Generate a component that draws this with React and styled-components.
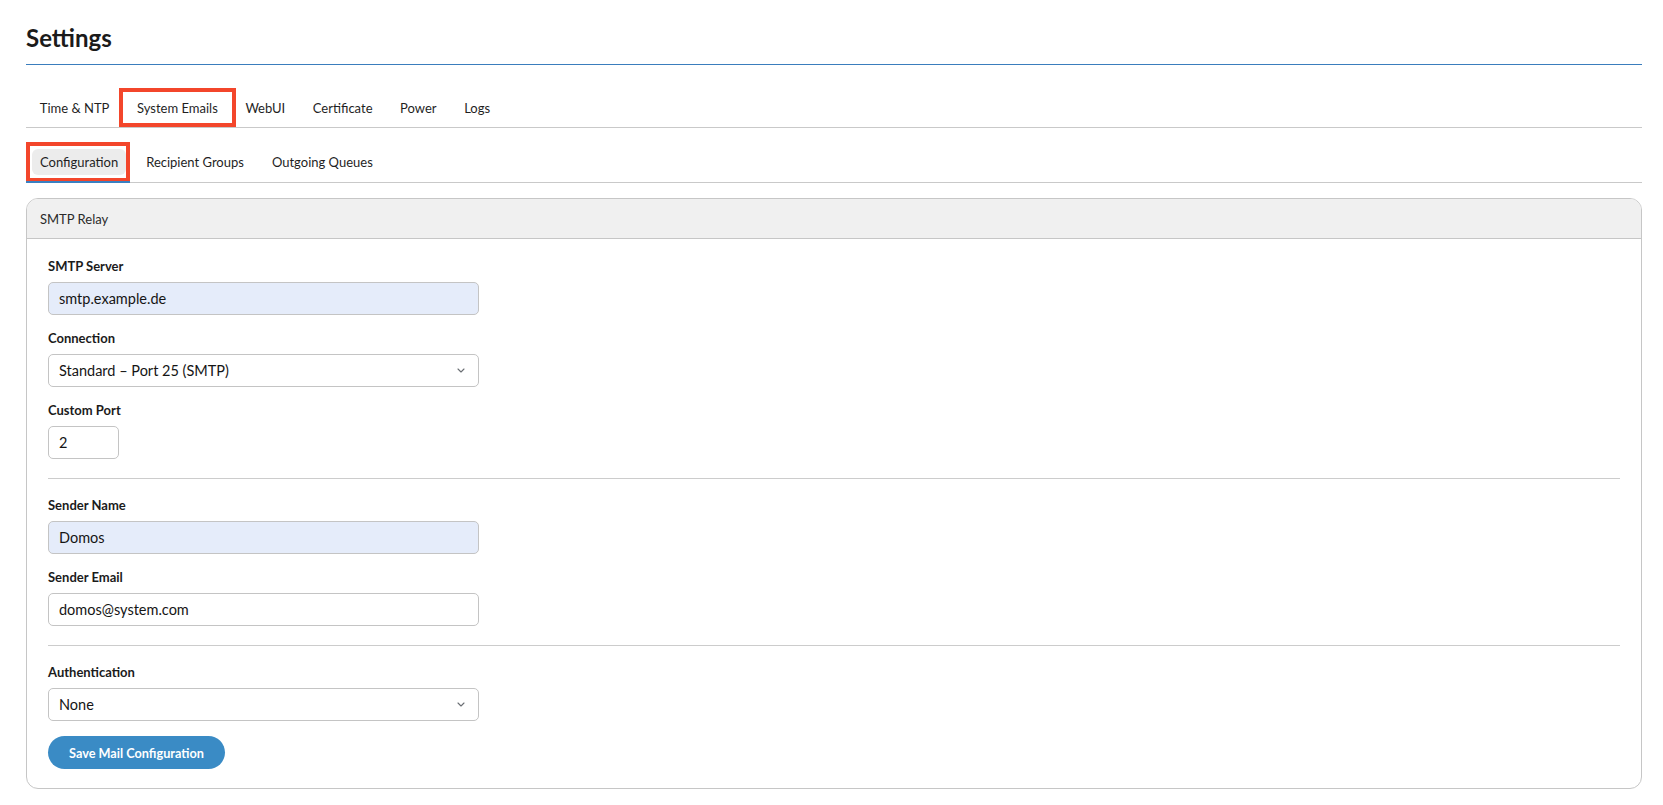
import styled, { createGlobalStyle } from "styled-components";

const GlobalStyle = createGlobalStyle`
  html, body {
    margin: 0;
    padding: 0;
    background: #ffffff;
  }
  body {
    font-family: Lato, "Liberation Sans", Arial, sans-serif;
    color: #151515;
  }
  * {
    box-sizing: border-box;
  }
`;

const mainTabs = ["Time & NTP", "System Emails", "WebUI", "Certificate", "Power", "Logs"];
const subTabs = ["Configuration", "Recipient Groups", "Outgoing Queues"];

const Chevron = () => (
  <svg width="8" height="5" viewBox="0 0 8 5" fill="none">
    <path d="M1 1l3 3 3-3" stroke="#6a6e73" strokeWidth="1.1" strokeLinecap="round" strokeLinejoin="round" />
  </svg>
);

export default function App() {
  return (
    <Page>
      <GlobalStyle />
      <Header>
        <Title>Settings</Title>
      </Header>

      <MainTabBar>
        {mainTabs.map((t) => (
          <MainTab key={t}>
            {t}
            {t === "System Emails" && <Marker $inset="0 -4px 0 -4px" />}
          </MainTab>
        ))}
      </MainTabBar>

      <SubTabBar>
        {subTabs.map((t, i) => (
          <SubTab key={t} $active={i === 0}>
            <SubTabPill $active={i === 0}>{t}</SubTabPill>
            {i === 0 && <Marker $inset="0 2px 0 0" />}
          </SubTab>
        ))}
      </SubTabBar>

      <Card>
        <CardHeader>SMTP Relay</CardHeader>
        <CardBody>
          <Field>
            <Label>SMTP Server</Label>
            <TextInput $autofill defaultValue="smtp.example.de" />
          </Field>
          <Field>
            <Label>Connection</Label>
            <SelectBox>
              <span>Standard – Port 25 (SMTP)</span>
              <Chevron />
            </SelectBox>
          </Field>
          <Field>
            <Label>Custom Port</Label>
            <TextInput $width="71px" defaultValue="2" />
          </Field>

          <Divider />

          <Field>
            <Label>Sender Name</Label>
            <TextInput $autofill defaultValue="Domos" />
          </Field>
          <Field>
            <Label>Sender Email</Label>
            <TextInput defaultValue="domos@system.com" />
          </Field>

          <Divider />

          <Field>
            <Label>Authentication</Label>
            <SelectBox>
              <span>None</span>
              <Chevron />
            </SelectBox>
          </Field>

          <SaveButton type="button">Save Mail Configuration</SaveButton>
        </CardBody>
      </Card>
    </Page>
  );
}

const Page = styled.div`
  padding: 0 21px 14px 26px;
`;

const Header = styled.header`
  padding: 24px 0 12px;
  border-bottom: 1px solid #3a7dbd;
`;

const Title = styled.h1`
  margin: 0;
  font-size: 24px;
  line-height: 28px;
  font-weight: 700;
  color: #1b1b1b;
`;

const MainTabBar = styled.nav`
  display: flex;
  margin-top: 23px;
  border-bottom: 1px solid #c9c9c9;
`;

const MainTab = styled.div`
  position: relative;
  display: flex;
  align-items: center;
  height: 39px;
  padding: 0 13.8px;
  font-size: 13px;
  color: #1f1f1f;
  white-space: nowrap;
`;

/* red outline drawn around the highlighted tabs */
const Marker = styled.span`
  position: absolute;
  inset: ${(p) => p.$inset};
  border: 4px solid #f3462b;
  pointer-events: none;
`;

const SubTabBar = styled.nav`
  display: flex;
  margin-top: 14px;
  border-bottom: 1px solid #c9c9c9;
`;

const SubTab = styled.div`
  position: relative;
  display: flex;
  align-items: stretch;
  height: 40px;
  padding: 7px 6px 7px;

  &::after {
    content: "";
    display: ${(p) => (p.$active ? "block" : "none")};
    position: absolute;
    left: 0;
    right: 2px;
    bottom: -1px;
    height: 2px;
    background: #3a80c2;
  }
`;

const SubTabPill = styled.div`
  display: flex;
  align-items: center;
  padding: 0 8px;
  border-radius: 6px;
  background: ${(p) => (p.$active ? "#ececec" : "transparent")};
  font-size: 13px;
  color: #1f1f1f;
  white-space: nowrap;
`;

const Card = styled.section`
  margin-top: 15px;
  border: 1px solid #c6c6c6;
  border-radius: 12px;
  overflow: hidden;
`;

const CardHeader = styled.div`
  height: 40px;
  display: flex;
  align-items: center;
  padding: 0 13px;
  background: #f0f0f0;
  border-bottom: 1px solid #c6c6c6;
  font-size: 13px;
  color: #2a2a2a;
`;

const CardBody = styled.div`
  display: flex;
  flex-direction: column;
  align-items: flex-start;
  padding: 18px 21px 19px;
`;

const Field = styled.div`
  display: flex;
  flex-direction: column;
  margin-bottom: 14px;

  &:last-of-type {
    margin-bottom: 0;
  }
`;

const Label = styled.label`
  font-size: 13px;
  line-height: 18px;
  font-weight: 700;
  color: #1b1b1b;
  margin-bottom: 7px;
`;

const TextInput = styled.input`
  width: ${(p) => p.$width || "431px"};
  height: 33px;
  padding: 0 10px;
  border: 1px solid #c4c4c4;
  border-radius: 5px;
  background: ${(p) => (p.$autofill ? "#e5ecfa" : "#ffffff")};
  font-family: inherit;
  font-size: 14.5px;
  color: #151515;
  outline: none;
`;

const SelectBox = styled.div`
  width: 431px;
  height: 33px;
  display: flex;
  align-items: center;
  justify-content: space-between;
  padding: 0 13px 0 10px;
  border: 1px solid #c4c4c4;
  border-radius: 5px;
  background: #ffffff;
  font-size: 14.5px;
  color: #151515;
`;

const Divider = styled.hr`
  align-self: stretch;
  margin: 5px 0 17px;
  border: 0;
  border-top: 1px solid #cccccc;
`;

const SaveButton = styled.button`
  margin-top: 15px;
  height: 33px;
  padding: 0 21px;
  border: 0;
  border-radius: 17px;
  background: #3a8bc5;
  color: #ffffff;
  font-family: inherit;
  font-size: 12.7px;
  font-weight: 700;
  cursor: pointer;
`;
